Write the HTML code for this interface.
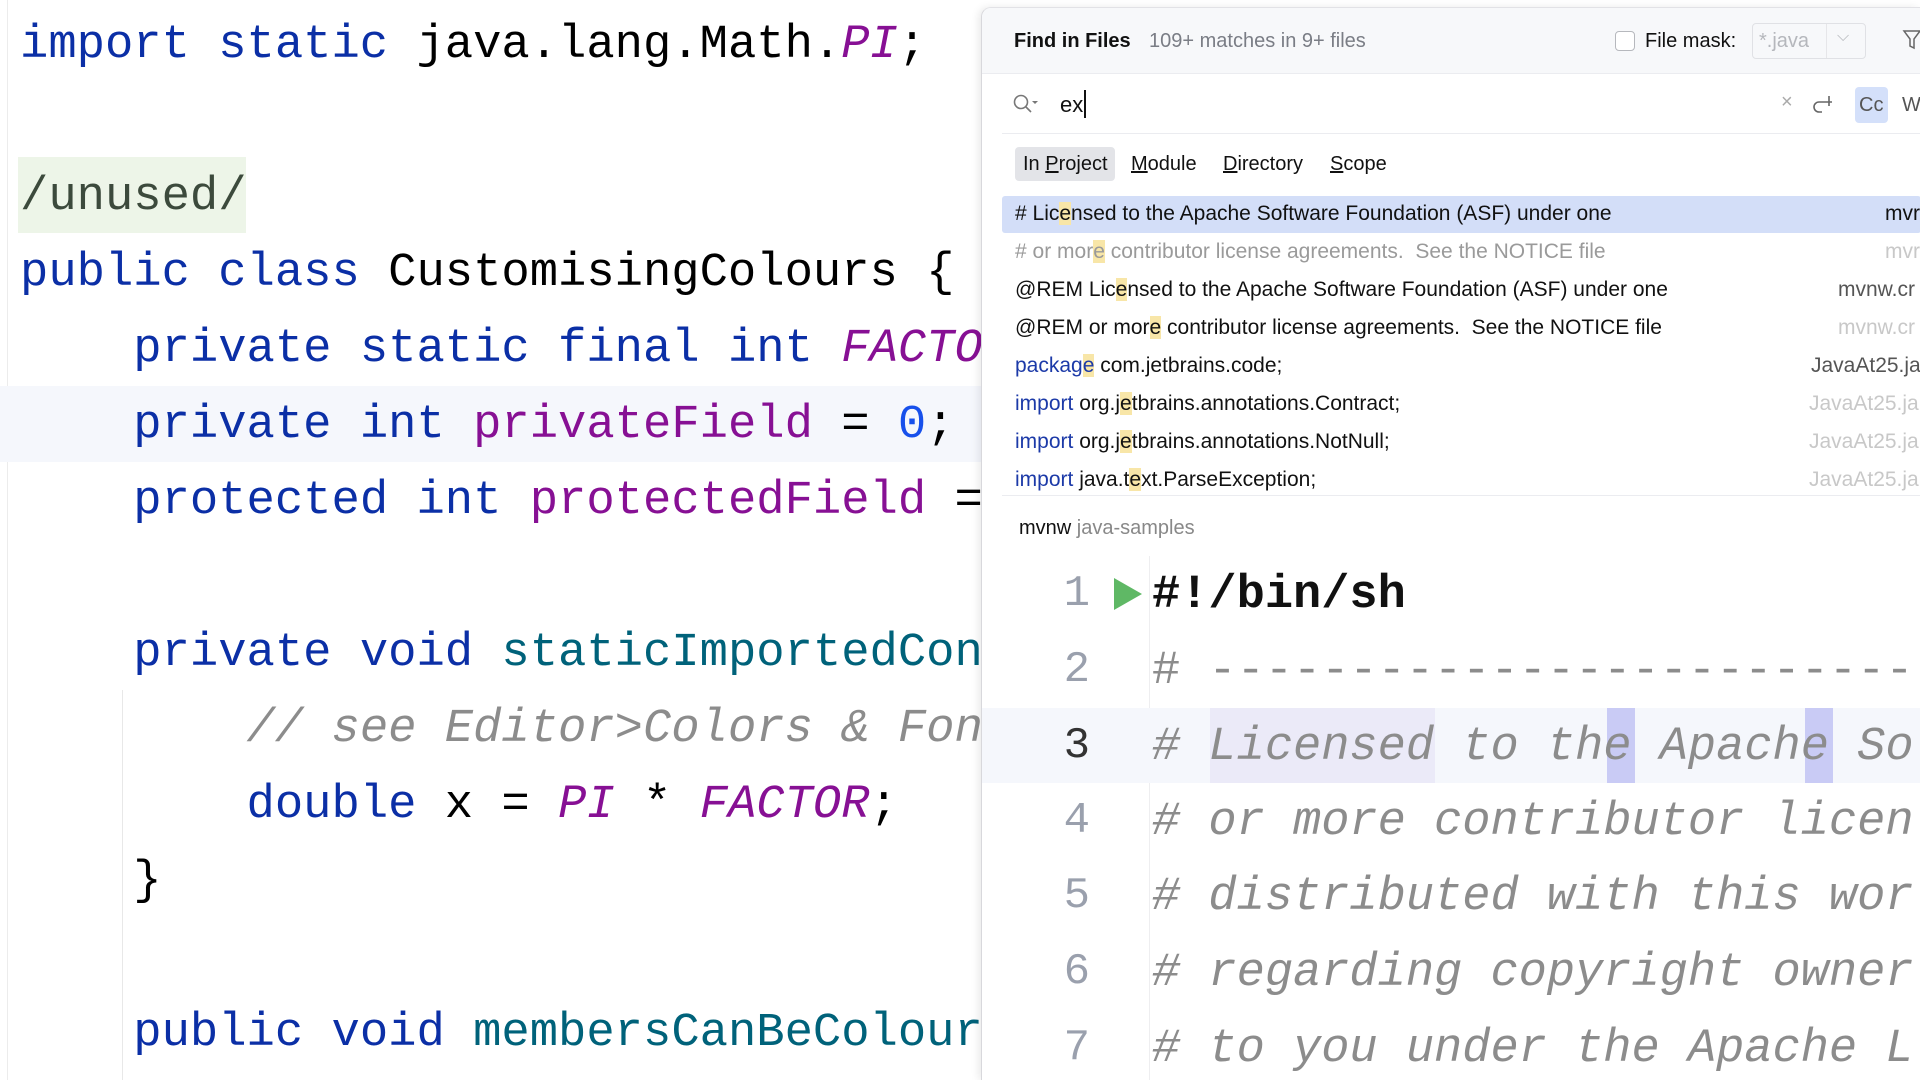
<!DOCTYPE html>
<html><head><meta charset="utf-8"><style>
*{margin:0;padding:0;box-sizing:border-box}
body{width:1920px;height:1080px;overflow:hidden;background:#fff;position:relative;font-family:"Liberation Sans",sans-serif}
.code{position:absolute;font-family:"Liberation Mono",monospace;font-size:47.2px;white-space:pre;line-height:76px;height:76px}
.k{color:#0b2fa6}.f{color:#871094}.fi{color:#871094;font-style:italic}.n{color:#1750eb}.c{color:#8c8c8c;font-style:italic}.m{color:#00627a}
.panel{position:absolute;left:981px;top:7px;width:939px;height:1073px;background:#fff;border-left:1px solid #d8d8dc;border-top:1px solid #e2e2e6;border-top-left-radius:10px;box-shadow:-3px 0 8px rgba(0,0,0,.08);overflow:hidden}
.a{position:absolute;white-space:pre}
.r{position:absolute;left:33px;height:38px;line-height:38px;font-size:21px;color:#111;white-space:pre}
.rr{position:absolute;height:38px;line-height:38px;font-size:21px;white-space:pre}
.h{background:#f8e6a8}
.kb{color:#1c3aa8}
.g{color:#9a9a9a}
.ln{position:absolute;left:68px;width:40px;text-align:right;font-family:"Liberation Mono",monospace;font-size:44px;color:#9aa0ad;line-height:76px}
.pc{position:absolute;left:170px;font-family:"Liberation Mono",monospace;font-size:47px;white-space:pre;line-height:76px;color:#8c8c8c;font-style:italic}
</style></head><body>
<div style="position:absolute;left:7px;top:0;width:1px;height:1080px;background:#ececec"></div>
<div style="position:absolute;left:0;top:386px;width:981px;height:76px;background:#f5f7fc"></div>
<div style="position:absolute;left:18px;top:157px;width:228px;height:76px;background:#edf5e8"></div>
<div style="position:absolute;left:122px;top:690px;width:1px;height:390px;background:#e8e8e8"></div>
<div class="code" style="left:20px;top:8px"><span class="k">import static </span>java.lang.Math.<span class="fi">PI</span>;</div>
<div class="code" style="left:20px;top:160px;color:#3c4a3c">/unused/</div>
<div class="code" style="left:20px;top:236px"><span class="k">public class </span>CustomisingColours {</div>
<div class="code" style="left:20px;top:312px">    <span class="k">private static final int </span><span class="fi">FACTOR</span></div>
<div class="code" style="left:20px;top:388px">    <span class="k">private int </span><span class="f">privateField</span> = <span class="n">0</span>;</div>
<div class="code" style="left:20px;top:464px">    <span class="k">protected int </span><span class="f">protectedField</span> =</div>
<div class="code" style="left:20px;top:616px">    <span class="k">private void </span><span class="m">staticImportedCon</span></div>
<div class="code" style="left:20px;top:692px">        <span class="c">// see Editor&gt;Colors &amp; Fon</span></div>
<div class="code" style="left:20px;top:768px">        <span class="k">double </span>x = <span class="fi">PI</span> * <span class="fi">FACTOR</span>;</div>
<div class="code" style="left:20px;top:844px">    }</div>
<div class="code" style="left:20px;top:996px">    <span class="k">public void </span><span class="m">membersCanBeColour</span></div>

<div class="panel">
 <div style="position:absolute;left:0;top:0;width:100%;height:66px;background:#f7f8fa;border-bottom:1px solid #ebecf0"></div>
 <div class="a" style="left:32px;top:22px;font-size:20px;font-weight:bold;color:#111">Find in Files</div>
 <div class="a" style="left:167px;top:22px;font-size:20px;color:#7a7d85">109+ matches in 9+ files</div>
 <div style="position:absolute;left:633px;top:23px;width:20px;height:20px;border:1.5px solid #b6b8bd;border-radius:4px;background:#fff"></div>
 <div class="a" style="left:663px;top:22px;font-size:20px;color:#111">File mask:</div>
 <div style="position:absolute;left:770px;top:15px;width:114px;height:36px;border:1px solid #e0e1e5;border-radius:4px"></div>
 <div style="position:absolute;left:844px;top:16px;width:1px;height:34px;background:#e6e6e9"></div>
 <div class="a" style="left:777px;top:22px;font-size:20px;color:#b5b7bc">*.java</div>
 <div class="a" style="left:855px;top:20px;font-size:16px;color:#b5b7bc">⌵</div>
 <svg style="position:absolute;left:920px;top:20px" width="20" height="24" viewBox="0 0 20 24"><path d="M2 3h16l-6 8v9l-4-2v-7z" fill="none" stroke="#666" stroke-width="1.5"/></svg>
 <svg style="position:absolute;left:30px;top:84px" width="28" height="24" viewBox="0 0 28 24"><circle cx="9" cy="10" r="6.5" fill="none" stroke="#777" stroke-width="1.6"/><path d="M14 15l5 5" stroke="#777" stroke-width="1.6"/><path d="M20 9h6l-3 3z" fill="#777"/></svg>
 <div class="a" style="left:78px;top:84px;font-size:22px;color:#111">ex</div>
 <div style="position:absolute;left:102px;top:82px;width:2px;height:28px;background:#111"></div>
 <div class="a" style="left:799px;top:83px;font-size:20px;color:#aaa">×</div>
 <svg style="position:absolute;left:830px;top:84px" width="24" height="24" viewBox="0 0 24 24"><path d="M10 20h-3a5 5 0 0 1 0-10h13M17 4v10" fill="none" stroke="#666" stroke-width="1.6"/></svg>
 <div style="position:absolute;left:873px;top:79px;width:33px;height:36px;background:#d4e0fa;border-radius:4px"></div>
 <div class="a" style="left:877px;top:86px;font-size:20px;color:#555">Cc</div>
 <div class="a" style="left:920px;top:86px;font-size:20px;color:#555">W</div>
 <div style="position:absolute;left:20px;top:125px;width:919px;height:1px;background:#ebecf0"></div>
 <div style="position:absolute;left:33px;top:139px;width:100px;height:34px;background:#e3e4e8;border-radius:4px"></div>
 <div class="a" style="left:41px;top:145px;font-size:20px;color:#111">In <u>P</u>roject</div>
 <div class="a" style="left:149px;top:145px;font-size:20px;color:#111"><u>M</u>odule</div>
 <div class="a" style="left:241px;top:145px;font-size:20px;color:#111"><u>D</u>irectory</div>
 <div class="a" style="left:348px;top:145px;font-size:20px;color:#111"><u>S</u>cope</div>
 <div style="position:absolute;left:20px;top:188px;width:919px;height:37px;background:#d3def8;border-radius:3px"></div>
 <div class="r" style="top:187px"># Lic<span class="h">e</span>nsed to the Apache Software Foundation (ASF) under one</div>
 <div class="rr" style="top:187px;left:903px;color:#111">mvr</div>
 <div class="r g" style="top:225px"># or mor<span class="h">e</span> contributor license agreements.  See the NOTICE file</div>
 <div class="rr" style="top:225px;left:903px;color:#c8c8c8">mvr</div>
 <div class="r" style="top:263px">@REM Lic<span class="h">e</span>nsed to the Apache Software Foundation (ASF) under one</div>
 <div class="rr" style="top:263px;left:856px;color:#555">mvnw.cr</div>
 <div class="r" style="top:301px">@REM or mor<span class="h">e</span> contributor license agreements.  See the NOTICE file</div>
 <div class="rr" style="top:301px;left:856px;color:#c8c8c8">mvnw.cr</div>
 <div class="r" style="top:339px"><span class="kb">packag<span class="h">e</span></span> com.jetbrains.code;</div>
 <div class="rr" style="top:339px;left:829px;color:#555">JavaAt25.ja</div>
 <div class="r" style="top:377px"><span class="kb">import</span> org.j<span class="h">e</span>tbrains.annotations.Contract;</div>
 <div class="rr" style="top:377px;left:827px;color:#c8c8c8">JavaAt25.ja</div>
 <div class="r" style="top:415px"><span class="kb">import</span> org.j<span class="h">e</span>tbrains.annotations.NotNull;</div>
 <div class="rr" style="top:415px;left:827px;color:#c8c8c8">JavaAt25.ja</div>
 <div class="r" style="top:453px;height:34px;overflow:hidden"><span class="kb">import</span> java.t<span class="h">e</span>xt.ParseException;</div>
 <div class="rr" style="top:453px;left:827px;color:#c8c8c8">JavaAt25.ja</div>
 <div style="position:absolute;left:20px;top:487px;width:919px;height:1px;background:#ebecf0"></div>
 <div class="a" style="left:37px;top:509px;font-size:20px;color:#111">mvnw <span style="color:#888">java-samples</span></div>
 <div style="position:absolute;left:167px;top:548px;width:1px;height:530px;background:#eeeef0"></div>
 <div style="position:absolute;left:0;top:700px;width:939px;height:75px;background:#f5f7fc"></div>
 <div style="position:absolute;left:228px;top:700px;width:225px;height:75px;background:#ebeaf8"></div>
 <div style="position:absolute;left:625px;top:700px;width:28px;height:75px;background:#c9cbf5"></div>
 <div style="position:absolute;left:823px;top:700px;width:28px;height:75px;background:#c9cbf5"></div>
 <div class="ln" style="top:548px">1</div>
 <div class="ln" style="top:624px">2</div>
 <div class="ln" style="top:700px;color:#333">3</div>
 <div class="ln" style="top:775px">4</div>
 <div class="ln" style="top:850px">5</div>
 <div class="ln" style="top:926px">6</div>
 <div class="ln" style="top:1002px">7</div>
 <svg style="position:absolute;left:130px;top:568px" width="32" height="36"><path d="M2 2L30 18L2 34Z" fill="#5fb865"/></svg>
 <div class="pc" style="top:550px;color:#111;font-style:normal;font-weight:bold">#!/bin/sh</div>
 <div class="pc" style="top:626px;font-style:normal"># ----------------------------</div>
 <div class="pc" style="top:702px"># Licensed to the Apache So</div>
 <div class="pc" style="top:777px"># or more contributor licen</div>
 <div class="pc" style="top:852px"># distributed with this wor</div>
 <div class="pc" style="top:928px"># regarding copyright owner</div>
 <div class="pc" style="top:1004px"># to you under the Apache L</div>
</div>
</body></html>
